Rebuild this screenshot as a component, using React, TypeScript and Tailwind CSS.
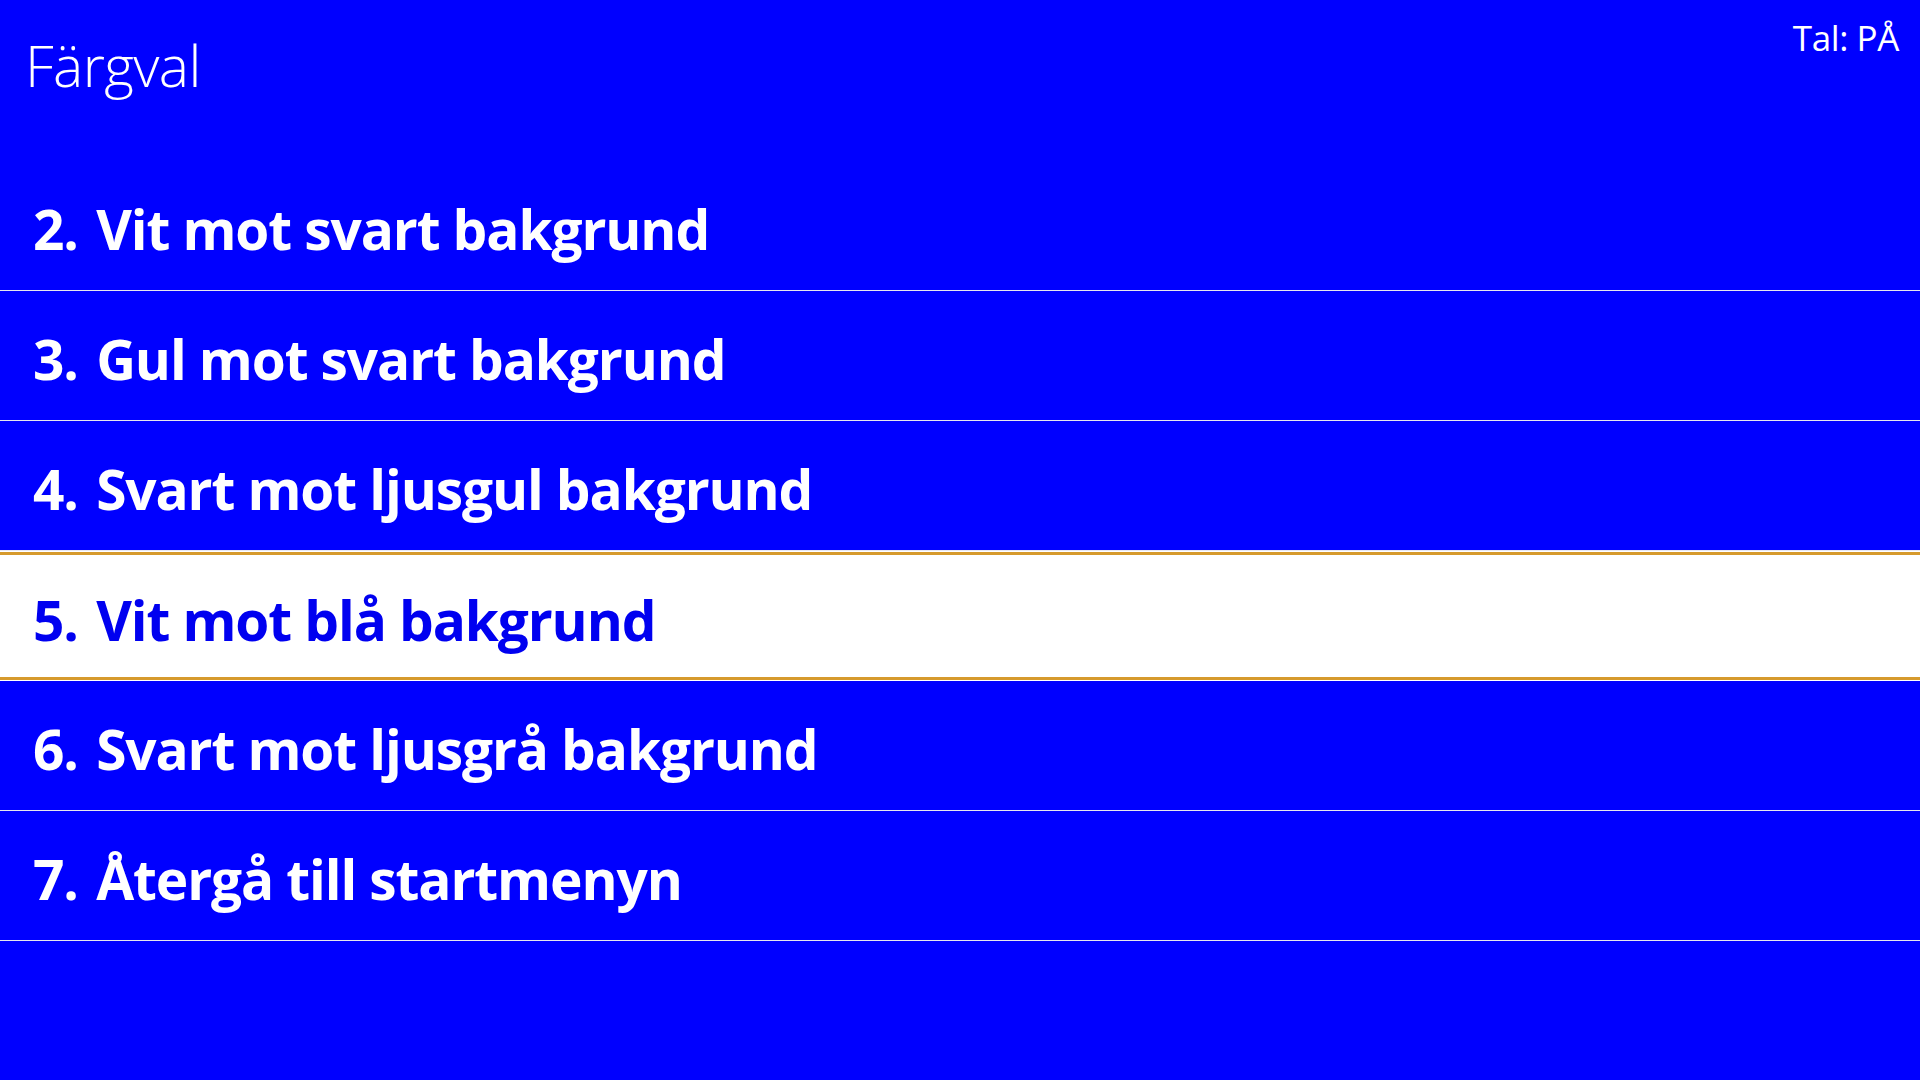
import React from 'react';

const items = [
  { id: 2, num: '2.', label: 'Vit mot svart bakgrund' },
  { id: 3, num: '3.', label: 'Gul mot svart bakgrund' },
  { id: 4, num: '4.', label: 'Svart mot ljusgul bakgrund' },
  { id: 5, num: '5.', label: 'Vit mot blå bakgrund' },
  { id: 6, num: '6.', label: 'Svart mot ljusgrå bakgrund' },
  { id: 7, num: '7.', label: 'Återgå till startmenyn' },
];

const selected = 5;

const App = () => {
  return (
    <div className="w-[1920px] h-[1080px] bg-[#0000ff] text-white overflow-hidden" style={{ fontFamily: '"Segoe UI", "Open Sans", "Noto Sans", sans-serif' }}>
      <div className="h-[161px] flex justify-between">
        <div className="pl-[25px] pt-[28px] text-[57px] font-light leading-[1.3] tracking-[-0.6px]">Färgval</div>
        <div className="pr-[21px] pt-[15px] text-[35px] leading-[1.3] tracking-[-0.4px]">Tal: PÅ</div>
      </div>
      <div className="flex flex-col">
        {items.map((item) =>
          item.id === selected ? (
            <div key={item.id} className="h-[130px] bg-white pt-px pb-px">
              <div className="h-full border-y-[3px] border-[#d69a2d] flex items-center pl-[33px] pt-[8px] text-[#0000f0] text-[55px] font-bold tracking-[-1.1px]">
                <span>
                  <span className="mr-[5px]">{item.num}</span> {item.label}
                </span>
              </div>
            </div>
          ) : (
            <div key={item.id} className="h-[130px] border-b border-[#e6e6f0] flex items-center pl-[33px] pt-[8px] text-[55px] font-bold tracking-[-1.1px]">
              <span>
                <span className="mr-[5px]">{item.num}</span> {item.label}
              </span>
            </div>
          )
        )}
      </div>
    </div>
  );
};

export default App;
